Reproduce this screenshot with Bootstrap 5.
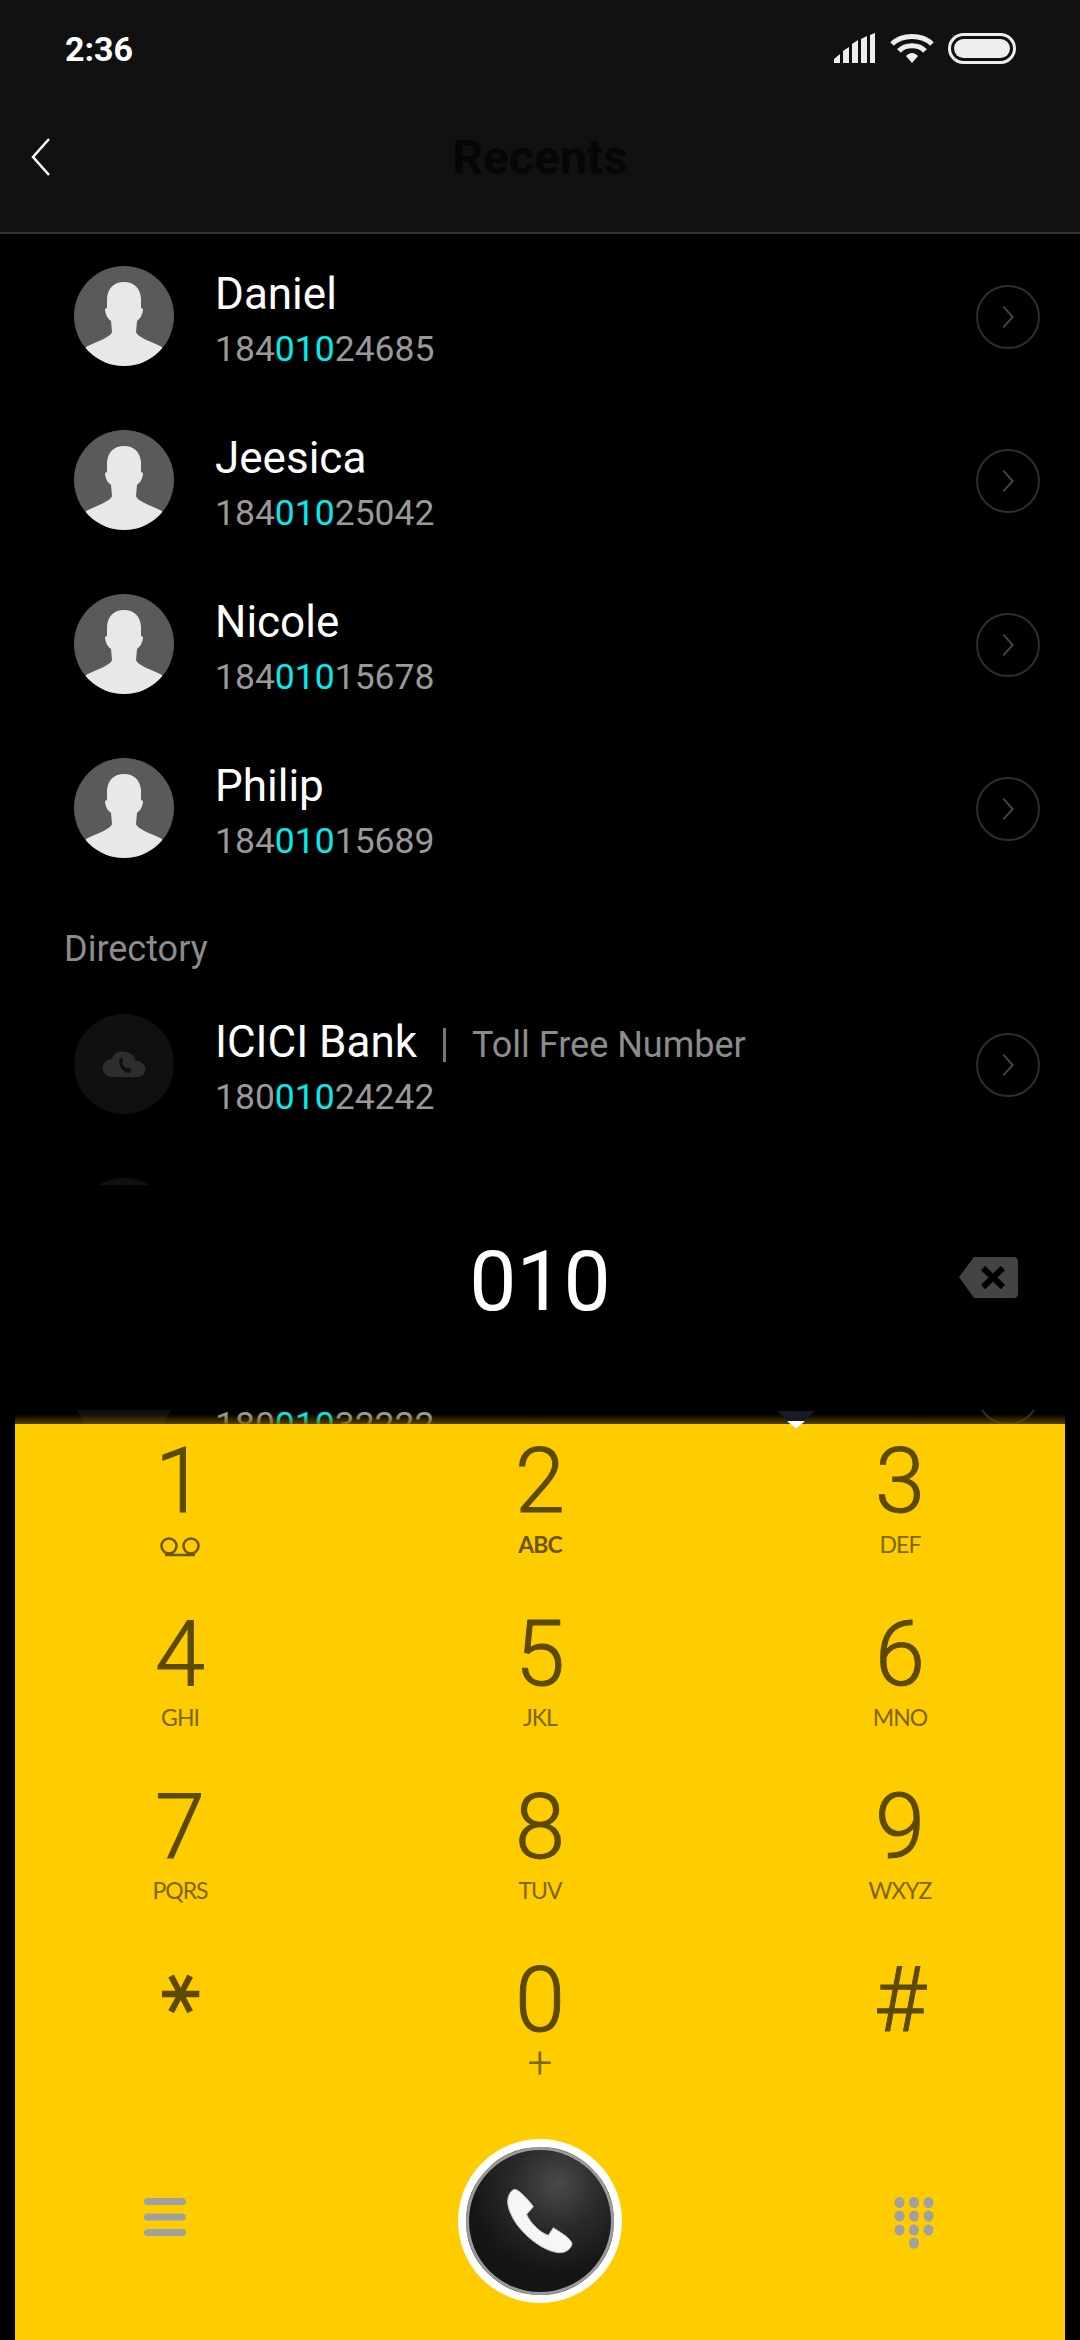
<!DOCTYPE html>
<html lang="en">
<head>
    <meta charset="UTF-8">
    <meta name="viewport" content="width=device-width, initial-scale=1.0">
    <title>Recents</title>
    <link rel="stylesheet" href="https://cdn.jsdelivr.net/npm/bootstrap@5.3.0/dist/css/bootstrap.min.css">
    <style>
        body { background: #000; font-family: Roboto, "Liberation Sans", sans-serif; }
        .phone-screen { width: 1080px; height: 2340px; position: relative; overflow: hidden; background: #000; }

        .top-head { height: 234px; background: #111; border-bottom: 2px solid #333; }
        .status-row { height: 98px; padding: 0 64px 0 65px; }
        .status-time { font-size: 34px; font-weight: 700; color: #fff; }
        .title-row { height: 120px; position: relative; }
        .back-arrow { position: absolute; left: 30px; top: 39px; }
        .page-title { font-size: 48px; font-weight: 700; color: #060606; line-height: 1; margin: 0; }

        .contact-row { height: 164px; padding: 0 0 0 74px; }
        .avatar-svg { width: 100px; height: 100px; flex: none; }
        .contact-text { margin-left: 41px; padding-top: 16px; flex: 1; }
        .contact-name { font-size: 44px; line-height: 50px; color: #fff; height: 50px; }
        .contact-num { font-size: 35.500px; line-height: 60px; color: #999; height: 60px; }
        .hit { color: #00eeee; }
        .sep-bar { display: inline-block; width: 3px; height: 34px; background: #777; margin: 0 26px 0 26px; vertical-align: -5px; }
        .toll-text { font-size: 36px; color: #8c8c8c; }
        .go-circle { width: 64px; height: 64px; border: 2px solid #2e2e2e; border-radius: 50%; margin: 1px 40px 0 0; flex: none; }
        .section-head { height: 92px; padding: 42px 0 0 64px; font-size: 36px; line-height: 34px; color: #8c8c8c; }

        .dial-layer { position: absolute; left: 0; right: 0; top: 1185px; bottom: 0; }
        .dial-show { height: 225px; background: #000; padding-bottom: 31px; position: relative; }
        .dial-value { font-size: 84px; color: #fff; line-height: 100px; }
        .back-key { position: absolute; left: 959px; top: 72px; }
        .dial-gap { height: 14px; position: relative; background: linear-gradient(to bottom, transparent 0, transparent 4px, rgba(110, 90, 0, .75) 14px); margin: 0 15px; }
        .sel-tip { position: absolute; left: 761px; top: 1px; }

        .dial-pad { margin: 0 15px; height: 916px; background: #fc0; }
        .pad-grid { margin: 0 -15px; width: 1080px; }
        .pad-key { height: 173px; padding-top: 13px; text-align: center; color: #5c4a00; }
        .pad-digit { font-weight: 300; font-size: 90px; line-height: 90px; height: 90px; -webkit-text-stroke: 1px #5c4a00; }
        .pad-sub { font-family: Lato, Roboto, sans-serif; font-size: 23px; line-height: 34px; height: 34px; color: #7d6500; letter-spacing: -1px; }
        .pad-sub.strong-sub { font-weight: 700; color: #6b5600; }
        .pad-plus { font-family: Roboto, sans-serif; font-size: 44px; font-weight: 300; letter-spacing: 0; }
        .pad-star { font-family: "DejaVu Sans", sans-serif; font-size: 80px; font-weight: 700; line-height: 90px; height: 90px; padding-top: 6px; }
        .star-glyph { display: inline-block; transform: rotate(90deg); transform-origin: 50% 32px; }

        .action-row { height: 210px; }
        .menu-ico { margin: 0 0 8px 144px; }
        .grid-ico { margin: 4px 0 0 174px; }
        .call-btn { width: 164px; height: 164px; border-radius: 50%; background: radial-gradient(circle at 62% 25%, #4a4a4a 0, #2b2b2b 30%, #151517 62%, #141416 100%); border: 8px solid #fff; box-shadow: inset 0 0 0 3px #9a9a9a; padding: 0; }
    </style>
</head>
<body>
    <svg width="0" height="0" class="d-block">
        <defs>
            <clipPath id="roundClip"><circle cx="50" cy="50" r="50"/></clipPath>
            <symbol id="personPic" viewBox="0 0 100 100">
                <circle cx="50" cy="50" r="50" fill="#5a5a5a"/>
                <path clip-path="url(#roundClip)" fill="#e8e8e8" d="M50 16C60 16 66 22 67 32V42L69 43C69 48 66 53 63 55L62 66C63 71 76 75 88 81V100H12V81C24 75 37 71 38 66L37 55C34 53 31 48 31 43L33 42V32C34 22 40 16 50 16Z"/>
            </symbol>
            <symbol id="cloudPic" viewBox="0 0 100 100">
                <circle cx="50" cy="50" r="50" fill="#101010"/>
                <g transform="translate(50 50) scale(.82) translate(-46 -48)">
                    <path fill="#2e2e2e" d="M33 64C25 64 20 59 20 53C20 47 25 42 31 42C33 35 40 32 46 33C53 33 59 38 60 44C66 44 72 48 72 54C72 60 67 64 61 64Z"/>
                    <path fill="#101010" d="M41 41C43 40 44 41 45 44C45 46 44 46 44 47C45 50 47 52 49 53C50 53 51 52 52 53C55 55 55 56 54 58C52 60 48 59 44 55C40 50 39 44 41 41Z"/>
                </g>
            </symbol>
            <symbol id="chevRight" viewBox="0 0 64 64">
                <path d="M27 21L37 32L27 43" fill="none" stroke="#444" stroke-width="2"/>
            </symbol>
        </defs>
    </svg>

    <div class="phone-screen">
        <header class="top-head">
            <div class="status-row d-flex align-items-center justify-content-between">
                <span class="status-time">2:36</span>
                <svg width="182" height="32" viewBox="0 0 182 32" fill="#eee">
                    <path d="M0 30V26L6 21V30ZM9 30V18L15 14V30ZM18 30V11L24 7V30ZM27 30V6L33 3V30ZM36 30V2L41 0V30Z"/>
                    <g fill="none" stroke="#eee" stroke-width="5">
                        <path d="M58 11C68 1 88 1 98 11"/>
                        <path d="M65 18C71 11 85 11 91 18"/>
                    </g>
                    <path d="M72 23C76 19 80 19 84 23L78 30Z"/>
                    <rect x="115.500" y="1.500" width="65" height="28" rx="14" fill="none" stroke="#eee" stroke-width="3"/>
                    <rect x="120" y="6" width="56" height="19" rx="9.500"/>
                </svg>
            </div>
            <div class="title-row d-flex align-items-center justify-content-center">
                <svg class="back-arrow" width="22" height="40" viewBox="0 0 22 40"><path d="M19 2L3 20L19 38" fill="none" stroke="#fff" stroke-width="2.500"/></svg>
                <h1 class="page-title">Recents</h1>
            </div>
        </header>

        <main>
            <div class="contact-row d-flex align-items-center">
                <svg class="avatar-svg"><use href="#personPic"/></svg>
                <div class="contact-text">
                    <div class="contact-name">Daniel</div>
                    <div class="contact-num">184<span class="hit">010</span>24685</div>
                </div>
                <div class="go-circle"><svg width="60" height="60"><use href="#chevRight"/></svg></div>
            </div>
            <div class="contact-row d-flex align-items-center">
                <svg class="avatar-svg"><use href="#personPic"/></svg>
                <div class="contact-text">
                    <div class="contact-name">Jeesica</div>
                    <div class="contact-num">184<span class="hit">010</span>25042</div>
                </div>
                <div class="go-circle"><svg width="60" height="60"><use href="#chevRight"/></svg></div>
            </div>
            <div class="contact-row d-flex align-items-center">
                <svg class="avatar-svg"><use href="#personPic"/></svg>
                <div class="contact-text">
                    <div class="contact-name">Nicole</div>
                    <div class="contact-num">184<span class="hit">010</span>15678</div>
                </div>
                <div class="go-circle"><svg width="60" height="60"><use href="#chevRight"/></svg></div>
            </div>
            <div class="contact-row d-flex align-items-center">
                <svg class="avatar-svg"><use href="#personPic"/></svg>
                <div class="contact-text">
                    <div class="contact-name">Philip</div>
                    <div class="contact-num">184<span class="hit">010</span>15689</div>
                </div>
                <div class="go-circle"><svg width="60" height="60"><use href="#chevRight"/></svg></div>
            </div>

            <div class="section-head">Directory</div>

            <div class="contact-row d-flex align-items-center">
                <svg class="avatar-svg"><use href="#cloudPic"/></svg>
                <div class="contact-text">
                    <div class="contact-name">ICICI Bank<span class="sep-bar"></span><span class="toll-text">Toll Free Number</span></div>
                    <div class="contact-num">180<span class="hit">010</span>24242</div>
                </div>
                <div class="go-circle"><svg width="60" height="60"><use href="#chevRight"/></svg></div>
            </div>
            <div class="contact-row d-flex align-items-center">
                <svg class="avatar-svg"><use href="#cloudPic"/></svg>
            </div>
            <div class="contact-row d-flex align-items-center">
                <svg class="avatar-svg"><use href="#cloudPic"/></svg>
                <div class="contact-text">
                    <div class="contact-name"></div>
                    <div class="contact-num">180<span class="hit">010</span>32222</div>
                </div>
                <div class="go-circle"></div>
            </div>
        </main>

        <section class="dial-layer">
            <div class="dial-show d-flex align-items-center justify-content-center">
                <div class="dial-value">010</div>
                <svg class="back-key" width="59" height="41" viewBox="0 0 59 41">
                    <path fill="#444" d="M15 0H55C57 0 59 2 59 4V37C59 39 57 41 55 41H15L0 20Z"/>
                    <path d="M24 11L44 30M44 11L24 30" stroke="#000" stroke-width="6" fill="none"/>
                </svg>
            </div>
            <div class="dial-gap">
                <svg class="sel-tip" width="40" height="18" viewBox="0 0 40 18">
                    <path d="M1 0H39L20 18Z" fill="#1a1a26"/>
                    <path d="M11 10H29L20 18Z" fill="#fff"/>
                </svg>
            </div>

            <div class="dial-pad">
                <div class="row g-0 pad-grid">
                    <div class="col-4 pad-key"><div class="pad-digit">1</div><div class="pad-sub"><svg width="42" height="20" viewBox="0 0 42 20" fill="none" stroke="#6b5600" stroke-width="2.500"><circle cx="10" cy="9" r="7.500"/><circle cx="32" cy="9" r="7.500"/><path d="M6 18H36"/></svg></div></div>
                    <div class="col-4 pad-key"><div class="pad-digit">2</div><div class="pad-sub strong-sub">ABC</div></div>
                    <div class="col-4 pad-key"><div class="pad-digit">3</div><div class="pad-sub">DEF</div></div>
                    <div class="col-4 pad-key"><div class="pad-digit">4</div><div class="pad-sub">GHI</div></div>
                    <div class="col-4 pad-key"><div class="pad-digit">5</div><div class="pad-sub">JKL</div></div>
                    <div class="col-4 pad-key"><div class="pad-digit">6</div><div class="pad-sub">MNO</div></div>
                    <div class="col-4 pad-key"><div class="pad-digit">7</div><div class="pad-sub">PQRS</div></div>
                    <div class="col-4 pad-key"><div class="pad-digit">8</div><div class="pad-sub">TUV</div></div>
                    <div class="col-4 pad-key"><div class="pad-digit">9</div><div class="pad-sub">WXYZ</div></div>
                    <div class="col-4 pad-key"><div class="pad-star"><span class="star-glyph">*</span></div></div>
                    <div class="col-4 pad-key"><div class="pad-digit">0</div><div class="pad-sub pad-plus">+</div></div>
                    <div class="col-4 pad-key"><div class="pad-digit">#</div></div>
                </div>
                <div class="row g-0 pad-grid action-row align-items-center">
                    <div class="col-4">
                        <svg class="menu-ico d-block" width="42" height="38" viewBox="0 0 42 38" fill="#a0a0a0">
                            <rect y="0" width="42" height="7" rx="3.500"/>
                            <rect y="15.500" width="42" height="7" rx="3.500"/>
                            <rect y="31" width="42" height="7" rx="3.500"/>
                        </svg>
                    </div>
                    <div class="col-4 d-flex justify-content-center">
                        <button type="button" class="btn call-btn d-flex align-items-center justify-content-center" aria-label="Call">
                            <svg width="70" height="70" viewBox="255 230 210 210">
                                <path fill="#f6f6f6" stroke="#bdbdbd" stroke-width="3" d="M285 240C295 240 325 270 340 292L320 315C330 340 360 370 385 378L400 355C420 368 450 385 456 402C455 420 435 432 415 430C370 425 320 385 290 345C270 315 258 285 265 262C270 248 278 240 285 240Z"/>
                            </svg>
                        </button>
                    </div>
                    <div class="col-4">
                        <svg class="grid-ico d-block" width="40" height="52" viewBox="0 0 40 52" fill="#a0a0a0">
                            <ellipse cx="5.500" cy="5.500" rx="5" ry="5.500"/><ellipse cx="20" cy="5.500" rx="5" ry="5.500"/><ellipse cx="34.500" cy="5.500" rx="5" ry="5.500"/>
                            <ellipse cx="5.500" cy="19" rx="5" ry="5.500"/><ellipse cx="20" cy="19" rx="5" ry="5.500"/><ellipse cx="34.500" cy="19" rx="5" ry="5.500"/>
                            <ellipse cx="5.500" cy="33" rx="5" ry="5.500"/><ellipse cx="20" cy="33" rx="5" ry="5.500"/><ellipse cx="34.500" cy="33" rx="5" ry="5.500"/>
                            <ellipse cx="20" cy="46" rx="5" ry="5.500"/>
                        </svg>
                    </div>
                </div>
            </div>
        </section>
    </div>

    <script src="https://cdn.jsdelivr.net/npm/bootstrap@5.3.0/dist/js/bootstrap.bundle.min.js"></script>
</body>
</html>
